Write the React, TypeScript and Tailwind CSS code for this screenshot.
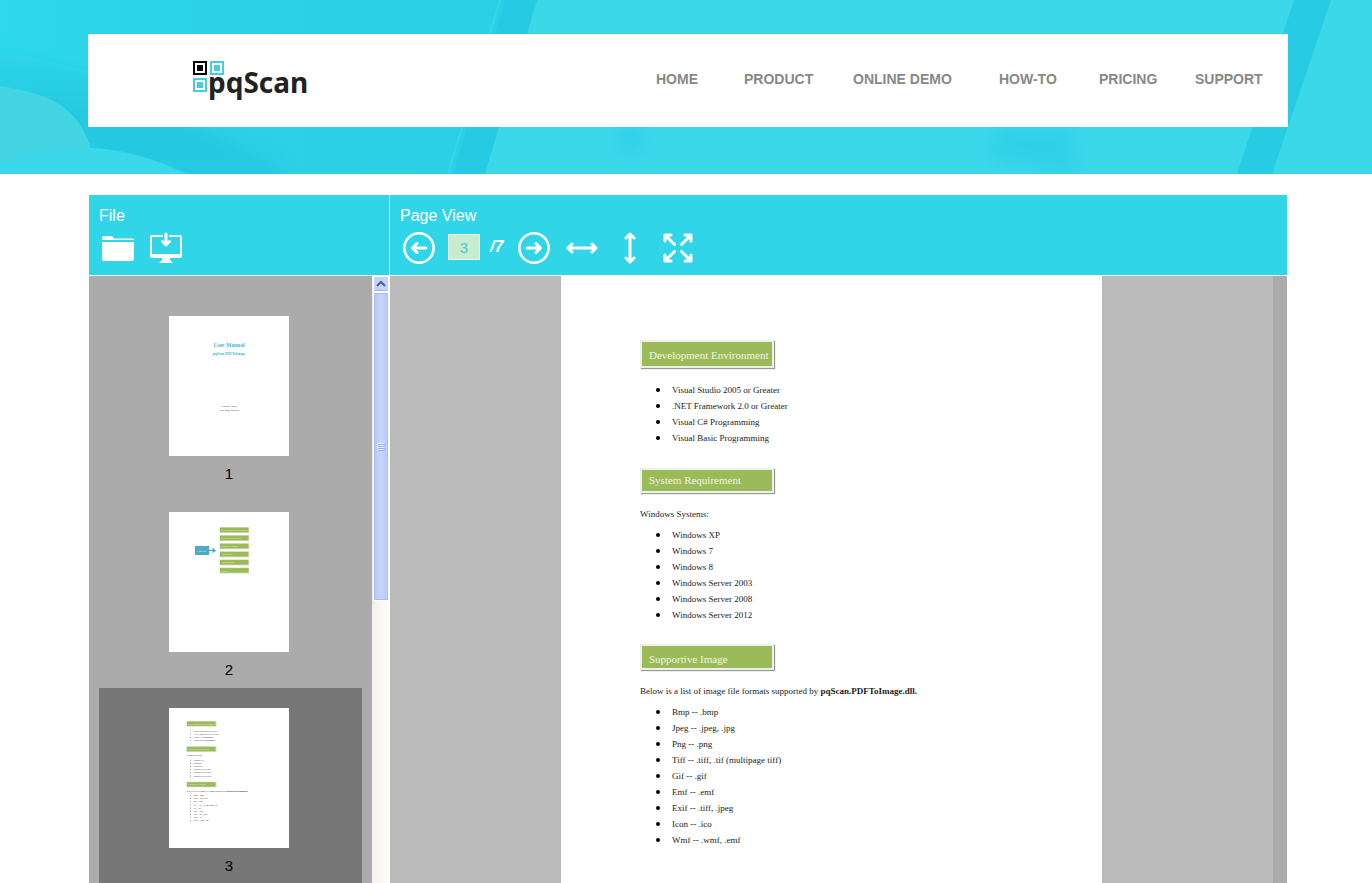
import React from "react";

const navItems = [
  { label: "HOME", width: "w-[88px]" },
  { label: "PRODUCT", width: "w-[109px]" },
  { label: "ONLINE DEMO", width: "w-[146px]" },
  { label: "HOW-TO", width: "w-[100px]" },
  { label: "PRICING", width: "w-[96px]" },
  { label: "SUPPORT", width: "w-[93px]" },
];

const environment = [
  "Visual Studio 2005 or Greater",
  ".NET Framework 2.0 or Greater",
  "Visual C# Programming",
  "Visual Basic Programming",
];

const systems = [
  "Windows XP",
  "Windows 7",
  "Windows 8",
  "Windows Server 2003",
  "Windows Server 2008",
  "Windows Server 2012",
];

const formats = [
  "Bmp -- .bmp",
  "Jpeg -- .jpeg, .jpg",
  "Png -- .png",
  "Tiff -- .tiff, .tif (multipage tiff)",
  "Gif -- .gif",
  "Emf -- .emf",
  "Exif -- .tiff, .jpeg",
  "Icon -- .ico",
  "Wmf -- .wmf, .emf",
];

function Backdrop() {
  return (
    <svg
      className="absolute inset-0 h-full w-full"
      viewBox="0 0 1372 174"
      preserveAspectRatio="none"
      aria-hidden="true"
    >
      <defs>
        <linearGradient id="base" x1="0" y1="0" x2="1" y2="0">
          <stop offset="0" stopColor="#2fd8ea" />
          <stop offset="0.15" stopColor="#2cd1e6" />
          <stop offset="1" stopColor="#2bcde4" />
        </linearGradient>
        <linearGradient id="shade" x1="0" y1="0" x2="0" y2="1">
          <stop offset="0" stopColor="#22c6df" stopOpacity="0" />
          <stop offset="0.5" stopColor="#22c6df" stopOpacity="0.8" />
          <stop offset="1" stopColor="#22c6df" stopOpacity="0.7" />
        </linearGradient>
        <filter id="soft" x="-50%" y="-50%" width="200%" height="200%">
          <feGaussianBlur stdDeviation="7" />
        </filter>
      </defs>
      <rect width="1372" height="174" fill="url(#base)" />
      <path d="M-20 40L90 75L280 165L270 190H-20Z" fill="url(#shade)" filter="url(#soft)" />
      <path d="M0 86C28 90 50 97 62 106C80 120 87 134 91 150C60 152 25 158 0 163Z" fill="#43d5e4" />
      <path d="M0 163C25 155 60 148 91 148C125 149 160 161 187 174H0Z" fill="#3ad8ea" />
      <path d="M500 0L448 174" stroke="#36d5e8" strokeWidth="2" fill="none" />
      <path d="M505 0H537L485 174H453Z" fill="#26cae2" />
      <path d="M537 0H1372V174H485Z" fill="#3bd8ea" />
      <path d="M1294 0H1331L1272 174H1237Z" fill="#27cbe3" />
      <path d="M998 126H1070L1078 176L990 158Z" fill="#2bcee5" opacity="0.7" filter="url(#soft)" />
      <ellipse cx="630" cy="138" rx="12" ry="14" fill="#2bcee5" opacity="0.7" filter="url(#soft)" />
    </svg>
  );
}

function Logo() {
  return (
    <a href="#home" aria-label="pqScan" className="flex items-start">
      <svg width="34" height="34" viewBox="0 0 34 34" className="mt-1 -mr-[18px]" aria-hidden="true">
        <g fill="none" strokeWidth="2">
          <rect x="2" y="2" width="12" height="12" stroke="#000" />
          <rect x="19" y="2" width="12" height="12" stroke="#43cfdf" />
          <rect x="2" y="19" width="12" height="12" stroke="#43cfdf" />
        </g>
        <rect x="5" y="5" width="6" height="6" fill="#000" />
        <rect x="22" y="5" width="6" height="6" fill="#43cfdf" />
        <rect x="5" y="22" width="6" height="6" fill="#43cfdf" />
      </svg>
      <span className="pt-2 font-['Noto_Sans','Open_Sans',sans-serif] text-[28px] leading-9 font-bold text-[#222]">
        pqScan
      </span>
    </a>
  );
}

function IconButton({ label, children }: { label: string; children: React.ReactNode }) {
  return (
    <button
      type="button"
      aria-label={label}
      className="flex h-8 w-8 shrink-0 items-center justify-center text-white"
    >
      <svg
        width="32"
        height="32"
        viewBox="0 0 32 32"
        fill="none"
        stroke="currentColor"
        strokeWidth="3"
        strokeLinecap="round"
        strokeLinejoin="round"
        aria-hidden="true"
      >
        {children}
      </svg>
    </button>
  );
}

function ThumbHeading({ y, text }: { y: number; text: string }) {
  return (
    <>
      <rect x="17.5" y={y} width="30" height="5.6" fill="#d3dfba" />
      <rect x="18" y={y + 0.5} width="28.5" height="4.4" fill="#9bbb59" />
      <text x="19.5" y={y + 3.6} fontSize="2.4" fill="#e5eed2">{text}</text>
    </>
  );
}

function ThumbList({ y, items }: { y: number; items: string[] }) {
  return (
    <>
      {items.map((item, i) => (
        <g key={item}>
          <circle cx="21.5" cy={y + i * 3.17 - 0.6} r="0.45" fill="#222" />
          <text x="24.5" y={y + i * 3.17} fontSize="2" fill="#222">{item}</text>
        </g>
      ))}
    </>
  );
}

const thumbClass = "block bg-white font-['Liberation_Serif',serif]";

function CoverThumb() {
  return (
    <svg width="120" height="140" viewBox="0 0 120 140" className={thumbClass} role="img" aria-label="Page 1">
      <g textAnchor="middle">
        <text x="60" y="31" fontSize="5.6" fontWeight="bold" fill="#3fb9d6">User Manual</text>
        <text x="60" y="38.5" fontSize="3.6" fontWeight="bold" fill="#3fb9d6">pqScan PDFToImage</text>
        <text x="60" y="91.4" fontSize="2.6" fill="#333">Version 1.0.0.0</text>
        <text x="60" y="95.4" fontSize="2.6" fill="#333">June 28th, pqScan</text>
      </g>
    </svg>
  );
}

function ContentsThumb() {
  const rows = ["Development Environment", "System Requirement", "Supportive Image", "License File", "Programming", "Contact"];
  return (
    <svg width="120" height="140" viewBox="0 0 120 140" className={thumbClass} role="img" aria-label="Page 2">
      <rect x="26" y="34" width="14" height="9" fill="#4bacc6" />
      <text x="28" y="39.5" fontSize="2.6" fill="#e4f4f8">Contents</text>
      <path d="M40 38.5H46M43.5 36.5L46 38.5L43.5 40.5" stroke="#4a9fc0" strokeWidth="1.2" fill="none" />
      {rows.map((row, i) => (
        <g key={row}>
          <rect x="50.5" y={15 + i * 8.1} width="29.5" height="6" fill="#d3dfba" />
          <rect x="51" y={15.6 + i * 8.1} width="28.5" height="4.6" fill="#9bbb59" />
          <text x="52" y={19 + i * 8.1} fontSize="2.4" fill="#e5eed2">{row}</text>
        </g>
      ))}
    </svg>
  );
}

function RequirementsThumb() {
  return (
    <svg width="120" height="140" viewBox="0 0 120 140" className={thumbClass} role="img" aria-label="Page 3">
      <ThumbHeading y={13} text="Development Environment" />
      <ThumbList y={23.5} items={environment} />
      <ThumbHeading y={38.3} text="System Requirement" />
      <text x="17.5" y="48.3" fontSize="2" fill="#222">Windows Systems:</text>
      <ThumbList y={52.7} items={systems} />
      <ThumbHeading y={73.7} text="Supportive Image" />
      <text x="17.5" y="83.7" fontSize="2" fill="#222">
        Below is a list of image file formats supported by <tspan fontWeight="bold">pqScan.PDFToImage.dll.</tspan>
      </text>
      <ThumbList y={88} items={formats} />
    </svg>
  );
}

const thumbs = [
  { page: 1, image: <CoverThumb /> },
  { page: 2, image: <ContentsThumb /> },
  { page: 3, image: <RequirementsThumb /> },
];

function SectionHeading({ children, className }: { children: string; className: string }) {
  return (
    <h2
      className={`w-[134px] border-2 border-[#eef0ec] bg-[#9bbb59] pl-[7px] text-[11px] whitespace-nowrap text-[#f0f5e4] shadow-[1px_1px_1px_#999] ${className}`}
    >
      {children}
    </h2>
  );
}

function BulletList({ items, className }: { items: string[]; className: string }) {
  return (
    <ul className={className}>
      {items.map((item) => (
        <li key={item} className="flex h-4 items-center pl-4">
          <span className="mr-3 h-1 w-1 shrink-0 rounded-full bg-black" />
          {item}
        </li>
      ))}
    </ul>
  );
}

function DocumentPage() {
  return (
    <article className="w-[541px] shrink-0 bg-white px-[79px] pt-16 font-['Liberation_Serif',serif] text-[9px] leading-4 text-[#222]">
      <SectionHeading className="h-[28px] leading-[26px]">Development Environment</SectionHeading>
      <BulletList items={environment} className="mt-[14px]" />
      <SectionHeading className="mt-[22px] h-[25px] leading-[20px]">System Requirement</SectionHeading>
      <p className="mt-[13px]">Windows Systems:</p>
      <BulletList items={systems} className="mt-[5px]" />
      <SectionHeading className="mt-[21px] h-[26px] leading-[26px]">Supportive Image</SectionHeading>
      <p className="mt-[13px] whitespace-nowrap">
        Below is a list of image file formats supported by <b>pqScan.PDFToImage.dll.</b>
      </p>
      <BulletList items={formats} className="mt-[5px]" />
    </article>
  );
}

function ThumbScrollbar() {
  return (
    <div className="w-[18px] shrink-0 border-r border-white bg-linear-to-r from-[#f3f0e9] to-[#fefefb] pl-px">
      <button
        type="button"
        aria-label="Scroll up"
        className="flex h-4 w-4 items-center justify-center rounded-xs border border-white bg-[#c3d3fd] shadow-[inset_0_-1px_0_#9db5ee]"
      >
        <svg width="10" height="8" viewBox="0 0 10 8" fill="none" stroke="#4d6185" strokeWidth="2" aria-hidden="true">
          <path d="M1 6L5 2L9 6" />
        </svg>
      </button>
      <div className="flex h-[309px] w-4 items-center justify-center rounded-xs border border-white bg-linear-to-r from-[#b7c9f8] via-[#c6d5ff] to-[#b8caf8] shadow-[inset_0_0_0_1px_#a9bdee]">
        <svg width="8" height="8" viewBox="0 0 8 8" aria-hidden="true">
          <path d="M0 .5H7M0 2.5H7M0 4.5H7M0 6.5H7" stroke="#eef4fe" />
          <path d="M1 1.5H8M1 3.5H8M1 5.5H8M1 7.5H8" stroke="#8cb0f8" />
        </svg>
      </div>
    </div>
  );
}

export default function App() {
  return (
    <div className="flex h-screen flex-col overflow-hidden bg-white font-['Liberation_Sans',Arial,sans-serif]">
      <header className="relative shrink-0 pt-[34px] pr-[84px] pb-[47px] pl-[88px]">
        <Backdrop />
        <div className="relative flex h-[93px] items-start justify-between bg-white pl-[104px]">
          <div className="pt-[22px]">
            <Logo />
          </div>
          <nav className="flex pt-[35px] text-sm font-bold text-[#888]">
            {navItems.map((item) => (
              <a key={item.label} href={`#${item.label.toLowerCase().replace(" ", "-")}`} className={item.width}>
                {item.label}
              </a>
            ))}
          </nav>
        </div>
      </header>

      <main className="mt-[21px] mr-[85px] ml-[89px] flex min-h-0 flex-1">
        <section className="flex w-[301px] shrink-0 flex-col">
          <div className="mr-px h-20 shrink-0 bg-[#31d5e8] pt-[11px] pl-[10px] text-white">
            <h1 className="text-base leading-5">File</h1>
            <div className="mt-[6px] ml-[3px] flex gap-4">
              <IconButton label="Open file">
                <path
                  d="M0 8V6Q0 4 2 4H9Q11 4 12 6.500H30Q32 6.500 32 8ZM0 10H32V27Q32 29 30 29H2Q0 29 0 27Z"
                  fill="currentColor"
                  stroke="none"
                />
              </IconButton>
              <IconButton label="Download">
                <path
                  d="M13 3H2Q0 3 0 5V24Q0 26 2 26H12V28L9 31H23L20 28V26H30Q32 26 32 24V5Q32 3 30 3H19V5H30V22H2V5H13Z"
                  fill="currentColor"
                  stroke="none"
                />
                <path d="M16 2V12M12.5 9.5L16 13L19.5 9.5" />
              </IconButton>
            </div>
          </div>
          <div className="mt-px flex min-h-0 flex-1 bg-[#ababab]">
            <ol className="flex-1 overflow-hidden px-[10px] pt-5">
              {thumbs.map(({ page, image }) => (
                <li key={page} className={page === 3 ? "bg-[#777]" : ""}>
                  <button
                    type="button"
                    className="flex h-[196px] w-full flex-col items-center pt-5 pr-[3px] text-[15px] leading-9 text-black"
                  >
                    {image}
                    <span>{page}</span>
                  </button>
                </li>
              ))}
            </ol>
            <ThumbScrollbar />
          </div>
        </section>

        <section className="flex min-w-0 flex-1 flex-col">
          <div className="h-20 shrink-0 bg-[#31d5e8] pt-[11px] pl-[10px] text-white">
            <h1 className="text-base leading-5">Page View</h1>
            <div className="mt-[6px] ml-[3px] flex items-center gap-4">
              <div className="flex items-center gap-[13px]">
                <IconButton label="Previous page">
                  <circle cx="16" cy="16" r="14.7" strokeWidth="2.6" />
                  <path d="M10 16H23M14 11.5L9.5 16L14 20.5" />
                </IconButton>
                <label className="flex items-center pb-0.5">
                  <input
                    type="text"
                    aria-label="Page number"
                    defaultValue="3"
                    className="h-[26px] w-8 border border-[#eef5ee] bg-[#c8ecce] text-center text-[15px] text-[#43cbd0]"
                  />
                  <span className="w-[25px] pl-[10px] text-base leading-5 font-bold italic">/7</span>
                </label>
                <IconButton label="Next page">
                  <circle cx="16" cy="16" r="14.7" strokeWidth="2.6" />
                  <path d="M9 16H22M18 11.5L22.5 16L18 20.5" />
                </IconButton>
              </div>
              <IconButton label="Fit width">
                <path d="M2 16H30M6 12L2 16L6 20M26 12L30 16L26 20" />
              </IconButton>
              <IconButton label="Fit height">
                <path d="M16 2V30M12 6L16 2L20 6M12 26L16 30L20 26" />
              </IconButton>
              <IconButton label="Full screen">
                <path d="M3 3L12.500 12.500M29 3L19.500 12.500M3 29L12.500 19.500M29 29L19.500 19.500M3 9V3H9M23 3H29V9M3 23V29H9M29 23V29H23" />
              </IconButton>
            </div>
          </div>
          <div className="mt-px flex min-h-0 flex-1 justify-center overflow-hidden border-r-[14px] border-[#ababab] bg-[#bababa]">
            <DocumentPage />
          </div>
        </section>
      </main>
    </div>
  );
}
